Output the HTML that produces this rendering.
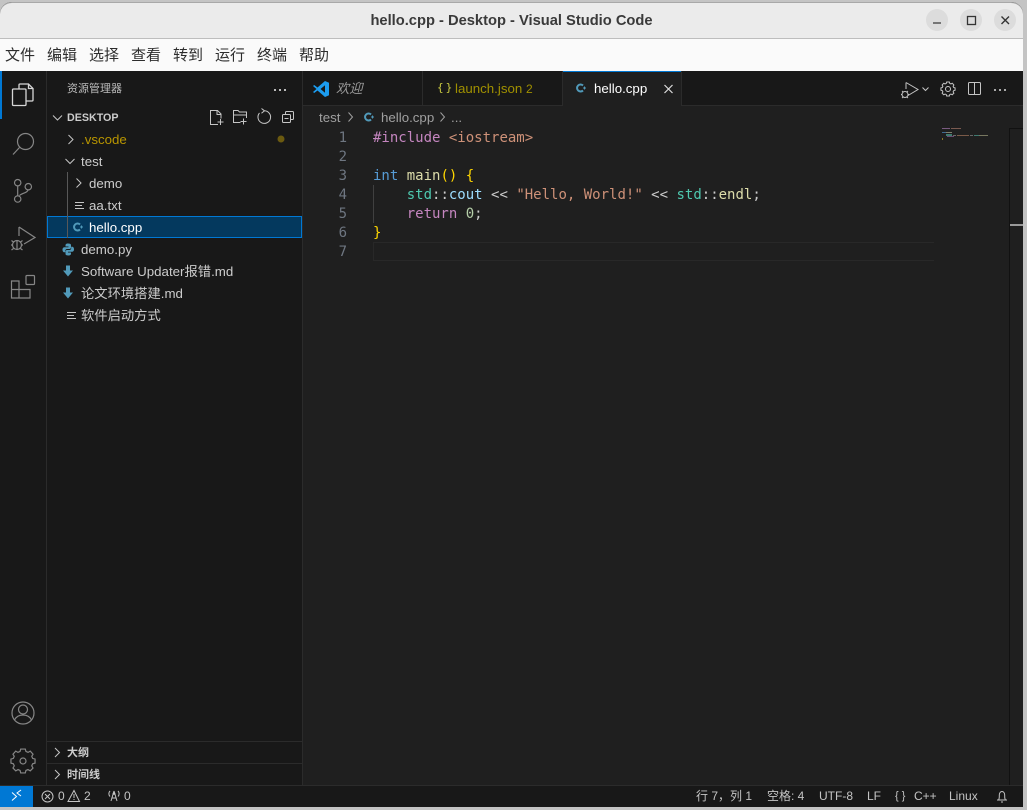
<!DOCTYPE html>
<html><head><meta charset="utf-8">
<style>
html,body{margin:0;padding:0;width:1027px;height:810px;overflow:hidden;background:#c4c4c4}
*{box-sizing:border-box}
.a{position:absolute;white-space:nowrap}
#w{position:absolute;left:0;top:2px;width:1023px;height:805px;border-radius:12px 12px 0 0;overflow:hidden;background:#181818}
body,.a{font-family:"DejaVu Sans","Noto Sans CJK SC",sans-serif}
.s{font-family:"Liberation Sans","Noto Sans CJK SC",sans-serif}
.t{font-size:13.300px;color:#cccccc;line-height:22px;height:22px;font-family:"Liberation Sans","Noto Sans CJK SC",sans-serif}
.c{font-family:"DejaVu Sans Mono",monospace;font-size:14px;line-height:19px;height:19px;color:#ccc;white-space:pre}
.n{font-family:"DejaVu Sans Mono",monospace;font-size:14px;line-height:19px;height:19px;color:#6e7681;width:30px;text-align:right}
.m{font-family:"Noto Sans CJK SC",sans-serif;font-size:15px;color:#2c2c2c;line-height:20px;top:45px}
.st{font-family:"Liberation Sans","Noto Sans CJK SC",sans-serif;font-size:12px;color:#c4c4c4;line-height:22px;top:785px}
svg{position:absolute;overflow:visible}
.i{fill:none;stroke:#868686;stroke-width:1.2}
.j{fill:none;stroke:#c5c5c5;stroke-width:1}
.ar{fill:none;stroke:#c5c5c5;stroke-width:1}
</style></head><body>
<div id="w"></div>
<div class="a" style="left:0;top:2px;width:1023px;height:37px;background:#ebebeb;border-bottom:1px solid #bdbdbd;border-top:1px solid #a8a8a8;border-radius:12px 12px 0 0"></div>
<div class="a s" style="left:0;width:1023px;top:11px;text-align:center;font-size:14.700px;font-weight:bold;color:#3a3a3a;line-height:20px">hello.cpp - Desktop - Visual Studio Code</div>
<div class="a" style="left:926px;top:9px;width:22px;height:22px;border-radius:50%;background:#dcdcdc"></div>
<div class="a" style="left:960px;top:9px;width:22px;height:22px;border-radius:50%;background:#dcdcdc"></div>
<div class="a" style="left:994px;top:9px;width:22px;height:22px;border-radius:50%;background:#dcdcdc"></div>
<svg style="left:0;top:0" width="1027" height="40"><path d="M933 23h8" stroke="#333" stroke-width="1.200"/><rect x="967.500" y="16.500" width="8" height="8" fill="none" stroke="#333" stroke-width="1.300"/><path d="M1001.500 16.500l7.500 7.500M1009 16.500l-7.500 7.500" stroke="#333" stroke-width="1.400"/></svg>

<div class="a" style="left:0;top:39px;width:1023px;height:32px;background:#fafafa"></div>
<div class="a m" style="left:5px">文件</div><div class="a m" style="left:47px">编辑</div><div class="a m" style="left:89px">选择</div><div class="a m" style="left:131px">查看</div><div class="a m" style="left:173px">转到</div><div class="a m" style="left:215px">运行</div><div class="a m" style="left:257px">终端</div><div class="a m" style="left:299px">帮助</div>

<div class="a" style="left:0;top:71px;width:47px;height:714px;background:#181818;border-right:1px solid #2b2b2b"></div>
<div class="a" style="left:0;top:71px;width:2px;height:48px;background:#0078d4"></div>
<div class="a" style="left:47px;top:71px;width:256px;height:714px;background:#181818;border-right:1px solid #2b2b2b"></div>
<div class="a" style="left:303px;top:71px;width:720px;height:714px;background:#1f1f1f"></div>

<!-- activity icons -->
<svg style="left:0;top:71px" width="47" height="714">
<g fill="none" stroke="#d7d7d7" stroke-width="1.300"><path d="M19 18v-4a1 1 0 0 1 1-1h8.500l4.500 4.500v11.500a1 1 0 0 1-1 1h-6"/><path d="M28.500 13v4.500h4.500"/><path d="M13.500 18h11.500a1 1 0 0 1 1 1v14.500a1 1 0 0 1-1 1h-11.500a1 1 0 0 1-1-1v-14.500a1 1 0 0 1 1-1z"/></g>
<g class="i"><circle cx="25.500" cy="70.500" r="8"/><path d="M19.500 76.500l-6.500 7"/></g>
<g class="i"><circle cx="17.700" cy="111.700" r="3.200"/><circle cx="17.700" cy="128" r="3.200"/><circle cx="28.300" cy="115.700" r="3.200"/><path d="M17.700 115v9.800M28 119c-.5 3-6 3-8.500 5.500"/></g>
<g class="i"><path d="M19 156l16 10.500-11 6.500"/><path d="M19 156v9"/><circle cx="17" cy="174" r="4.500"/><path d="M11.500 169.500l2.500 2M22.500 169.500l-2.500 2M11 174h1.500M21.500 174h1.500M11.500 179l2-1.500M22.500 179l-2-1.500M17 169.500v9"/></g>
<g class="i"><path d="M11.500 210h7.500v17h-7.500zM19 218.500h11v8.500h-11M11.500 218.500h7.500"/><rect x="26" y="204.500" width="8.500" height="9" rx="1"/></g>
<g class="i"><circle cx="23" cy="642" r="11"/><circle cx="23" cy="638.500" r="4.500"/><path d="M14.500 649c2-4 5-5 8.500-5s6.500 1 8.500 5"/></g>
<g class="i"><circle cx="23" cy="690" r="3"/><path transform="translate(1.840 52.440) scale(.92)" stroke-width="1.300" d="M20.500 680h5l.7 2.600 2.300 1 2.400-1.300 3 3.300-1.400 2.300 1 2.300 2.600.7v4.400l-2.600.7-1 2.300 1.400 2.400-3 3-2.500-1.400-2.200 1-.7 2.700h-5l-.7-2.700-2.200-1-2.500 1.400-3-3 1.400-2.400-1-2.300-2.600-.7v-4.400l2.600-.7 1-2.300-1.400-2.300 3-3.300 2.400 1.300 2.300-1z"/></g>
</svg>

<!-- sidebar header -->
<div class="a s" style="left:67px;top:80px;font-size:11px;color:#bbbbbb;line-height:16px;font-family:'Noto Sans CJK SC',sans-serif">资源管理器</div>
<div class="a" style="left:274px;top:89px;width:2px;height:2px;background:#bbb;box-shadow:5px 0 #bbb,10px 0 #bbb"></div>
<div class="a s" style="left:67px;top:110px;font-size:10.700px;font-weight:bold;color:#cccccc;line-height:16px">DESKTOP</div>

<svg style="left:0;top:0" width="320" height="340">
<path class="ar" d="M53 115.500l4.500 4.500 4.500-4.500"/>
<g class="j"><path d="M218 124.500h-7.500v-14h7l3.500 3.500v4.500M217 110.500v4h4.500M220.500 119v6M217.500 122h6"/></g>
<g class="j"><path d="M240.500 122.500h-7v-12h4.500l1.500 1.500h7v6M233.500 115h13M243.500 118.500v6M240.500 121.500h6"/></g>
<g class="j"><path d="M259.500 113a6.300 6.300 0 1 0 5-2.200M261.500 108.500l3 2.300-3 2.500"/></g>
<g class="j"><rect x="282.500" y="114.500" width="8" height="8" rx="1"/><path d="M285.500 114.500v-2a1 1 0 0 1 1-1h6a1 1 0 0 1 1 1v6a1 1 0 0 1-1 1h-2M284.500 118.500h4"/></g>
<circle cx="281" cy="139" r="3.500" fill="#6b5a10"/>
<path class="ar" d="M68.500 135l4.500 4.500-4.500 4.500"/>
<path class="ar" d="M65.500 159l4.500 4.500 4.500-4.500"/>
<path class="ar" d="M76.500 178.500l4.500 4.500-4.500 4.500"/>
</svg>

<div class="a" style="left:47px;top:216px;width:255px;height:22px;background:#04395e;border:1px solid #0078d4"></div>
<svg style="left:0;top:0" width="320" height="340"><path d="M67.500 172v66" stroke="#585858"/>
<g stroke="#c5c5c5"><path d="M75 202.500h9M75 205.500h7M75 208.500h9" /></g>
<g stroke="#c5c5c5"><path d="M67 312.500h9M67 315.500h7M67 318.500h9"/></g>
<g><path d="M80 224.500a3.500 3.500 0 1 0 0 5" fill="none" stroke="#519aba" stroke-width="2"/><path d="M80 227h3M81.500 225.500v3" stroke="#519aba"/></g>
<path d="M68 243.500c-2 0-2.500 1-2.500 2v1h3v.7h-4c-1.500 0-2 1.300-2 2.500s.6 2.500 1.800 2.500h1v-1.500c0-1 .8-1.700 1.700-1.700h2.500c.8 0 1.500-.7 1.500-1.500v-2.500c0-1-1-1.500-3-1.500z" fill="#519aba"/>
<path d="M68.500 255.500c2 0 2.500-1 2.500-2v-1h-3v-.7h4c1.500 0 2-1.300 2-2.500s-.6-2.500-1.800-2.500h-1v1.500c0 1-.8 1.700-1.700 1.700h-2.500c-.8 0-1.500.7-1.500 1.500v2.500c0 1 1 1.500 3 1.500z" fill="#519aba"/>
<path d="M66 265.500h4v5h3l-5 6-5-6h3z" fill="#519aba"/>
<path d="M66 287.500h4v5h3l-5 6-5-6h3z" fill="#519aba"/>
</svg>

<div class="a t" style="left:81px;top:129px;color:#b89500">.vscode</div>
<div class="a t" style="left:81px;top:151px">test</div>
<div class="a t" style="left:89px;top:173px">demo</div>
<div class="a t" style="left:89px;top:195px">aa.txt</div>
<div class="a t" style="left:89px;top:217px;color:#fff">hello.cpp</div>
<div class="a t" style="left:81px;top:239px">demo.py</div>
<div class="a t" style="left:81px;top:261px">Software Updater报错.md</div>
<div class="a t" style="left:81px;top:283px">论文环境搭建.md</div>
<div class="a t" style="left:81px;top:305px">软件启动方式</div>

<!-- outline -->
<div class="a" style="left:47px;top:741px;width:255px;height:1px;background:#2b2b2b"></div>
<div class="a" style="left:47px;top:763px;width:255px;height:1px;background:#2b2b2b"></div>
<svg style="left:0;top:740px" width="80" height="50"><path class="ar" d="M55 8l4.500 4.500-4.500 4.500M55 30l4.500 4.500-4.500 4.500"/></svg>
<div class="a" style="left:67px;top:744px;font-size:11px;font-weight:bold;color:#cccccc;line-height:16px;font-family:'Noto Sans CJK SC',sans-serif">大纲</div>
<div class="a" style="left:67px;top:766px;font-size:11px;font-weight:bold;color:#cccccc;line-height:16px;font-family:'Noto Sans CJK SC',sans-serif">时间线</div>

<!-- tabs -->
<div class="a" style="left:303px;top:71px;width:720px;height:35px;background:#181818;border-bottom:1px solid #2b2b2b"></div>
<div class="a" style="left:422px;top:71px;width:1px;height:35px;background:#2b2b2b"></div>
<div class="a" style="left:562px;top:71px;width:1px;height:35px;background:#2b2b2b"></div>
<div class="a" style="left:681px;top:71px;width:1px;height:35px;background:#2b2b2b"></div>
<div class="a" style="left:563px;top:71px;width:118px;height:36px;background:#1f1f1f;border-top:1px solid #0078d4"></div>
<svg style="left:0;top:70px" width="1023" height="50">
<path d="M325 11l4 1.800v12.400l-4 1.800-7.500-6.500-3.300 2.500-1.200-1 3.500-3-3.500-3 1.200-1 3.300 2.500zM325 15.200l-4.500 3.800 4.500 3.800z" fill="#1c9cef" fill-rule="evenodd"/>
<path d="M583 15.500a3.500 3.500 0 1 0 0 5" fill="none" stroke="#519aba" stroke-width="2"/><path d="M583 18h3M584.500 16.500v3" stroke="#519aba"/>
<path d="M664.500 15l8 8M672.500 15l-8 8" stroke="#ddd" stroke-width="1.200"/>
<!-- actions -->
<g class="j"><path d="M906 12.500l12 7-10 6M906 12.500v6.500"/><circle cx="905" cy="24.500" r="3"/><path d="M902 21l1.300 1M908 21l-1.300 1M901 24.500h1M908 24.500h1M902 28l1.300-1M908 28l-1.300-1"/><path d="M922.500 17.500l3 3 3-3"/></g>
<g class="j"><circle cx="948" cy="19" r="2.500"/><path transform="translate(935.580 -355.220) scale(.54)" stroke-width="1.850" d="M20.500 680h5l.7 2.600 2.300 1 2.400-1.300 3 3.300-1.400 2.300 1 2.300 2.600.7v4.400l-2.600.7-1 2.300 1.400 2.400-3 3-2.500-1.400-2.200 1-.7 2.700h-5l-.7-2.700-2.200-1-2.500 1.400-3-3 1.400-2.400-1-2.300-2.600-.7v-4.400l2.600-.7 1-2.300-1.400-2.300 3-3.300 2.400 1.300 2.300-1z"/></g>
<g class="j"><rect x="968.500" y="12.500" width="12" height="12" rx="1"/><path d="M974.500 12.500v12"/></g>
</svg>
<div class="a" style="left:994px;top:89px;width:2px;height:2px;background:#aaa;box-shadow:5px 0 #aaa,10px 0 #aaa"></div>
<div class="a t" style="left:336px;top:78px;font-style:italic;color:#9a9a9a">欢迎</div>
<div class="a" style="left:437px;top:80px;font-family:'DejaVu Sans Mono',monospace;font-size:11px;line-height:16px;letter-spacing:2px;color:#cbcb41">{}</div>
<div class="a t" style="left:455px;top:78px;color:#a09000">launch.json</div>
<div class="a t" style="left:526px;top:78px;color:#a09000;font-size:12px">2</div>
<div class="a t" style="left:594px;top:78px;color:#fff">hello.cpp</div>

<!-- breadcrumbs -->
<div class="a t" style="left:319px;top:107px;color:#a0a0a0">test</div>
<svg style="left:0;top:105px" width="500" height="24"><path d="M348.500 7.500l4 4.500-4 4.500M440.500 7.500l4 4.500-4 4.500" fill="none" stroke="#a0a0a0"/><path d="M371 9.500a3.500 3.500 0 1 0 0 5" fill="none" stroke="#519aba" stroke-width="2"/><path d="M371 12h3M372.500 10.500v3" stroke="#519aba"/></svg>
<div class="a t" style="left:381px;top:107px;color:#a0a0a0">hello.cpp</div>
<div class="a t" style="left:451px;top:107px;color:#a0a0a0">...</div>

<!-- code -->
<div class="a n" style="left:317px;top:129px">1</div>
<div class="a n" style="left:317px;top:148px">2</div>
<div class="a n" style="left:317px;top:167px">3</div>
<div class="a n" style="left:317px;top:186px">4</div>
<div class="a n" style="left:317px;top:205px">5</div>
<div class="a n" style="left:317px;top:224px">6</div>
<div class="a n" style="left:317px;top:243px">7</div>
<div class="a c" style="left:373px;top:129px"><span style="color:#c586c0">#include</span><span style="color:#ce9178"> &lt;iostream&gt;</span></div>
<div class="a c" style="left:373px;top:167px"><span style="color:#569cd6">int</span> <span style="color:#dcdcaa">main</span><span style="color:#ffd700">()</span> <span style="color:#ffd700">{</span></div>
<div class="a c" style="left:373px;top:186px">    <span style="color:#4ec9b0">std</span>::<span style="color:#9cdcfe">cout</span> &lt;&lt; <span style="color:#ce9178">"Hello, World!"</span> &lt;&lt; <span style="color:#4ec9b0">std</span>::<span style="color:#dcdcaa">endl</span>;</div>
<div class="a c" style="left:373px;top:205px">    <span style="color:#c586c0">return</span> <span style="color:#b5cea8">0</span>;</div>
<div class="a c" style="left:373px;top:224px;color:#ffd700">}</div>
<div class="a" style="left:373px;top:185px;width:1px;height:38px;background:#404040"></div>
<div class="a" style="left:373px;top:242px;width:561px;height:19px;border:1px solid #282828;border-right:0"></div>

<!-- minimap -->
<svg style="left:0;top:0" width="1023" height="240">
<rect x="942" y="128" width="8" height="1" fill="#7a5a80"/><rect x="951" y="128" width="10" height="1" fill="#7a5a50"/>
<rect x="942" y="132" width="4" height="1" fill="#3f6a90"/><rect x="946" y="132" width="6" height="1" fill="#808070"/>
<rect x="946" y="134" width="6" height="2" fill="#3f7a70"/><rect x="953" y="135" width="3" height="1" fill="#666"/><rect x="957" y="135" width="12" height="1" fill="#7a5a48"/><rect x="970" y="135" width="3" height="1" fill="#666"/><rect x="974" y="135" width="5" height="1" fill="#3f7a70"/><rect x="979" y="135" width="9" height="1" fill="#777760"/>
<rect x="947" y="136" width="7" height="1" fill="#6a4a70"/><rect x="942" y="138" width="1" height="2" fill="#887a28"/>
<rect x="1009" y="128" width="1" height="657" fill="#111"/>
<rect x="1010" y="224" width="13" height="2" fill="#9a9a9a"/>
<rect x="1009" y="128" width="14" height="1" fill="#111"/>
</svg>
<svg style="left:0;top:0" width="1023" height="810"><rect x="1009" y="240" width="1" height="545" fill="#111"/></svg>

<!-- status -->
<div class="a" style="left:0;top:785px;width:1023px;height:22px;background:#181818;border-top:1px solid #2b2b2b"></div>
<div class="a" style="left:0;top:786px;width:33px;height:21px;background:#0078d4"></div>
<svg style="left:0;top:785px" width="1023" height="22">
<path d="M12 7.500l4.500 4-4.500 4M21 5l-4 3 4 3" fill="none" stroke="#fff" stroke-width="1"/>
<circle cx="47.500" cy="11.500" r="5.500" fill="none" stroke="#c4c4c4"/><path d="M45 9l5 5M50 9l-5 5" stroke="#c4c4c4"/>
<path d="M74 5.500l5.500 11h-11.500zM74 9v4M74 14v1" fill="none" stroke="#c4c4c4"/>
<path d="M114 6l-3 10M114 6l3 10M111.800 13h4.400" fill="none" stroke="#c4c4c4"/><circle cx="114" cy="8.500" r="1.300" fill="#c4c4c4"/><path d="M110 6c-1.500 1.500-1.500 4 0 5.500M118 6c1.500 1.500 1.500 4 0 5.500" fill="none" stroke="#c4c4c4"/>
<path d="M997 15h10M998.500 15c1-1.500.8-3 .8-5 0-2 1.200-3.500 2.700-3.500s2.700 1.500 2.700 3.500c0 2-.2 3.500.8 5M1001 17h2" fill="none" stroke="#c4c4c4"/>
</svg>
<div class="a st" style="left:58px;">0</div>
<div class="a st" style="left:84px;">2</div>
<div class="a st" style="left:124px;">0</div>
<div class="a st" style="left:696px;">行 7，列 1</div>
<div class="a st" style="left:767px;">空格: 4</div>
<div class="a st" style="left:819px;">UTF-8</div>
<div class="a st" style="left:867px;">LF</div>
<div class="a st" style="left:895px;font-size:11px">{ }</div>
<div class="a st" style="left:914px;">C++</div>
<div class="a st" style="left:949px;">Linux</div>
</body></html>
